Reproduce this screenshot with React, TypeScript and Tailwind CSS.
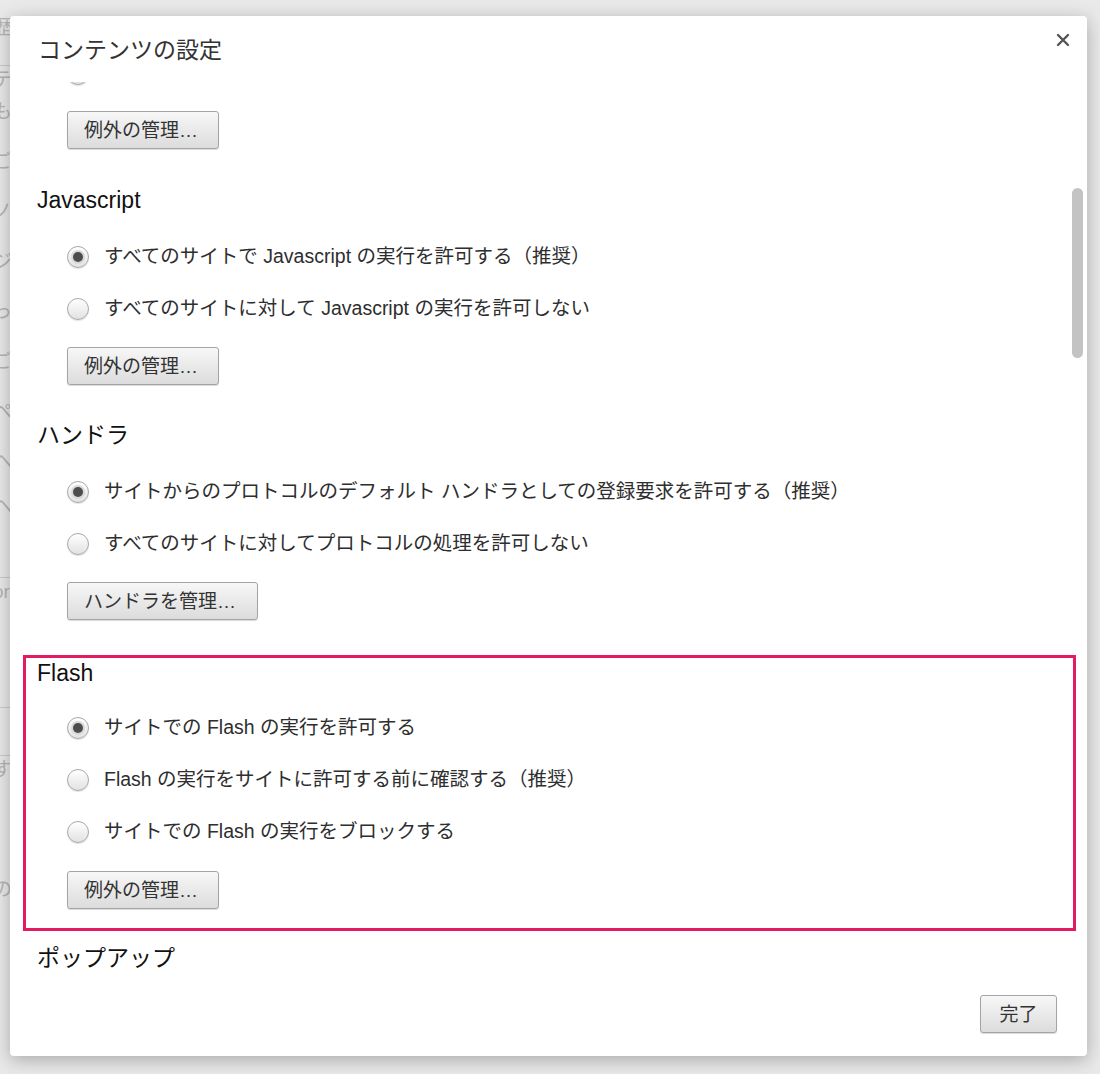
import React from 'react';

const FONT = "font-['Liberation_Sans','Noto_Sans_CJK_JP',sans-serif]";

type Option = { label: string; checked?: boolean };

const backdrop: { t: string; h: number; line?: boolean }[] = [
  { t: '歴', h: 52, line: true },
  { t: 'テ', h: 32 },
  { t: 'も', h: 50 },
  { t: 'ご', h: 50 },
  { t: 'ノ', h: 50 },
  { t: 'ジ', h: 50 },
  { t: 'っ', h: 50 },
  { t: 'ご', h: 50 },
  { t: 'ペ', h: 50 },
  { t: 'ヘ', h: 45 },
  { t: 'ヘ', h: 85, line: true },
  { t: 'or', h: 100 },
  { t: '', h: 30, line: true },
  { t: '', h: 48, line: true },
  { t: 'す', h: 120 },
  { t: 'の', h: 50 },
];

function Radio({ checked }: { checked?: boolean }) {
  return (
    <span className="flex h-[22px] w-[22px] shrink-0 items-center justify-center rounded-full border border-[#a9a9a9] bg-gradient-to-b from-[#ffffff] to-[#e2e2e2] shadow-[0_1px_1px_rgba(0,0,0,0.12)]">
      {checked && <span className="h-[10px] w-[10px] rounded-full bg-[#4d4d4d] shadow-[0_0_0_2px_#d8d8d8]" />}
    </span>
  );
}

function RadioRow({ label, checked }: Option) {
  return (
    <div className="flex h-[52px] items-center gap-[15px] pl-[30px]">
      <Radio checked={checked} />
      <span className="text-[19.5px] leading-none text-[#2e2e2e]">{label}</span>
    </div>
  );
}

function GrayButton({ children, className = '' }: { children: React.ReactNode; className?: string }) {
  return (
    <button
      className={`flex h-[38px] items-center rounded-[3px] border border-[#a4a4a4] bg-gradient-to-b from-[#f7f7f7] to-[#dcdcdc] px-[16px] text-[19px] leading-none text-[#333] shadow-[0_1px_1px_rgba(0,0,0,0.15)] ${className}`}
    >
      {children}
    </button>
  );
}

function Heading({ children, className = '' }: { children: React.ReactNode; className?: string }) {
  return <div className={`h-[28px] text-[23px] leading-[28px] text-[#111] ${className}`}>{children}</div>;
}

export default function App() {
  return (
    <div className={`relative h-[1074px] w-full overflow-hidden bg-[#e9e9e9] ${FONT}`}>
      {/* page behind the overlay */}
      <div className="flex flex-col pt-[14px] text-[19px] text-[#b5b5b5]">
        {backdrop.map((b, i) => (
          <div
            key={i}
            className={`-ml-[7px] w-[40px] ${b.line ? 'border-b border-[#c9c9c9]' : ''}`}
            style={{ height: b.h }}
          >
            {b.t}
          </div>
        ))}
      </div>

      {/* dialog */}
      <div className="absolute left-[10px] top-[16px] flex h-[1040px] w-[1077px] flex-col rounded-[4px] bg-white shadow-[0_4px_18px_rgba(0,0,0,0.28)]">
        <div className="flex h-[66px] shrink-0 justify-between pl-[28px] pr-[17px] pt-[20px]">
          <div className="text-[23px] leading-[28px] text-[#333]">コンテンツの設定</div>
          <button className="mt-[-3px] h-[14px] w-[14px]" aria-label="close">
            <svg viewBox="0 0 14 14" width="14" height="14">
              <path d="M2 2 L12 12 M12 2 L2 12" stroke="#555" strokeWidth="2.4" strokeLinecap="round" />
            </svg>
          </button>
        </div>

        <div className="relative flex-1 overflow-hidden">
          <div className="-mt-[28px] flex flex-col pl-[27px]">
            {/* tail of the previous section, scrolled out of view */}
            <div className="flex h-[40px] items-center pl-[30px]">
              <Radio />
            </div>
            <GrayButton className="ml-[30px] mt-[17px] w-[152px]">例外の管理…</GrayButton>

            <Heading className="mt-[37px]">Javascript</Heading>
            <div className="mt-[17px]">
              <RadioRow checked label="すべてのサイトで Javascript の実行を許可する（推奨）" />
              <RadioRow label="すべてのサイトに対して Javascript の実行を許可しない" />
            </div>
            <GrayButton className="ml-[30px] mt-[12px] w-[152px]">例外の管理…</GrayButton>

            <Heading className="mt-[36px]">ハンドラ</Heading>
            <div className="mt-[17px]">
              <RadioRow checked label="サイトからのプロトコルのデフォルト ハンドラとしての登録要求を許可する（推奨）" />
              <RadioRow label="すべてのサイトに対してプロトコルの処理を許可しない" />
            </div>
            <GrayButton className="ml-[30px] mt-[12px] w-[191px]">ハンドラを管理…</GrayButton>

            <div className="-ml-[14px] mt-[35px] w-[1053px] border-[3px] border-[#e31b63] pb-[19px] pl-[11px] pt-[1px]">
              <Heading>Flash</Heading>
              <div className="mt-[15px]">
                <RadioRow checked label="サイトでの Flash の実行を許可する" />
                <RadioRow label="Flash の実行をサイトに許可する前に確認する（推奨）" />
                <RadioRow label="サイトでの Flash の実行をブロックする" />
              </div>
              <GrayButton className="ml-[30px] mt-[13px] w-[152px]">例外の管理…</GrayButton>
            </div>

            <Heading className="mt-[13px]">ポップアップ</Heading>
          </div>

          {/* overlay scrollbar */}
          <div className="absolute right-[4px] top-[106px] h-[170px] w-[11px] rounded-full bg-[#c3c3c3]" />
        </div>

        <div className="flex h-[76px] shrink-0 justify-end pr-[30px] pt-[15px]">
          <GrayButton className="h-[37px] w-[77px] justify-center px-0">完了</GrayButton>
        </div>
      </div>
    </div>
  );
}
